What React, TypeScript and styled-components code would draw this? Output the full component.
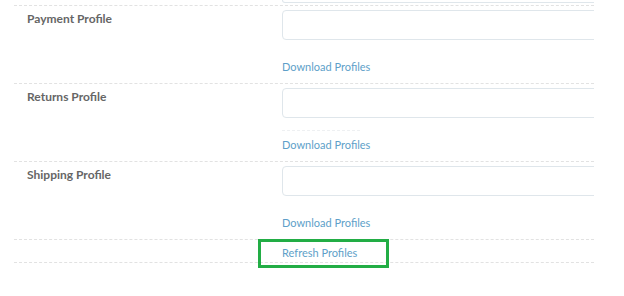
import styled, { createGlobalStyle } from "styled-components";

const GlobalStyle = createGlobalStyle`
  html, body {
    margin: 0;
    padding: 0;
    background: #ffffff;
    font-family: Lato, "Open Sans", sans-serif;
  }
`;

const Panel = styled.div`
  margin-left: 14px;
  width: 580px;
  padding-bottom: 12px;
  overflow: hidden;
`;

const TailRow = styled.div`
  padding-left: 268px;
  padding-bottom: 2px;
`;

const InputTail = styled.div`
  height: 2px;
  width: 400px;
  border: 1px solid #dfe6eb;
  border-top: none;
  border-radius: 0 0 4px 4px;
`;

const Row = styled.div`
  display: grid;
  grid-template-columns: 268px 1fr;
  border-top: 1px dashed #e2e2e2;
  padding: 4px 0 8px;
`;

const Label = styled.div`
  padding: 1px 0 0 13px;
  font-size: 12px;
  line-height: 16px;
  font-weight: 700;
  color: #666666;
`;

const Field = styled.div`
  display: flex;
  flex-direction: column;
  align-items: flex-start;
`;

const Input = styled.input`
  box-sizing: border-box;
  width: 400px;
  height: 30px;
  border: 1px solid #dfe6eb;
  border-radius: 4px;
  background: #fff;
  outline: none;
`;

const Divider = styled.div`
  margin-top: 12px;
  width: 78px;
  border-top: 1px dashed #eef0f2;
`;

const Link = styled.a<{ $gap?: number }>`
  display: block;
  margin-top: ${(p) => p.$gap ?? 19}px;
  font-size: 11px;
  line-height: 16px;
  color: #5e9fc9;
  text-decoration: none;
  cursor: pointer;
`;

const ActionRow = styled.div`
  display: grid;
  grid-template-columns: 268px 1fr;
  border-top: 1px dashed #e2e2e2;
  border-bottom: 1px dashed #e2e2e2;
  height: 22px;
  align-items: start;
`;

const Highlight = styled.div`
  position: relative;
  justify-self: start;
  padding-top: 5px;
`;

const HighlightBox = styled.div`
  position: absolute;
  left: -24px;
  top: -1px;
  width: 125px;
  height: 23px;
  border: 3px solid #22ad45;
  pointer-events: none;
`;

const profiles = ["Payment Profile", "Returns Profile", "Shipping Profile"];

const App = () => {
  return (
    <>
      <GlobalStyle />
      <Panel>
        <TailRow>
          <InputTail />
        </TailRow>
        {profiles.map((name, i) => (
          <Row key={name}>
            <Label>{name}</Label>
            <Field>
              <Input type="text" />
              {i === 1 && <Divider />}
              <Link $gap={i === 1 ? 6 : 19}>Download Profiles</Link>
            </Field>
          </Row>
        ))}
        <ActionRow>
          <div />
          <Highlight>
            <Link $gap={0}>Refresh Profiles</Link>
            <HighlightBox />
          </Highlight>
        </ActionRow>
      </Panel>
    </>
  );
};

export default App;
